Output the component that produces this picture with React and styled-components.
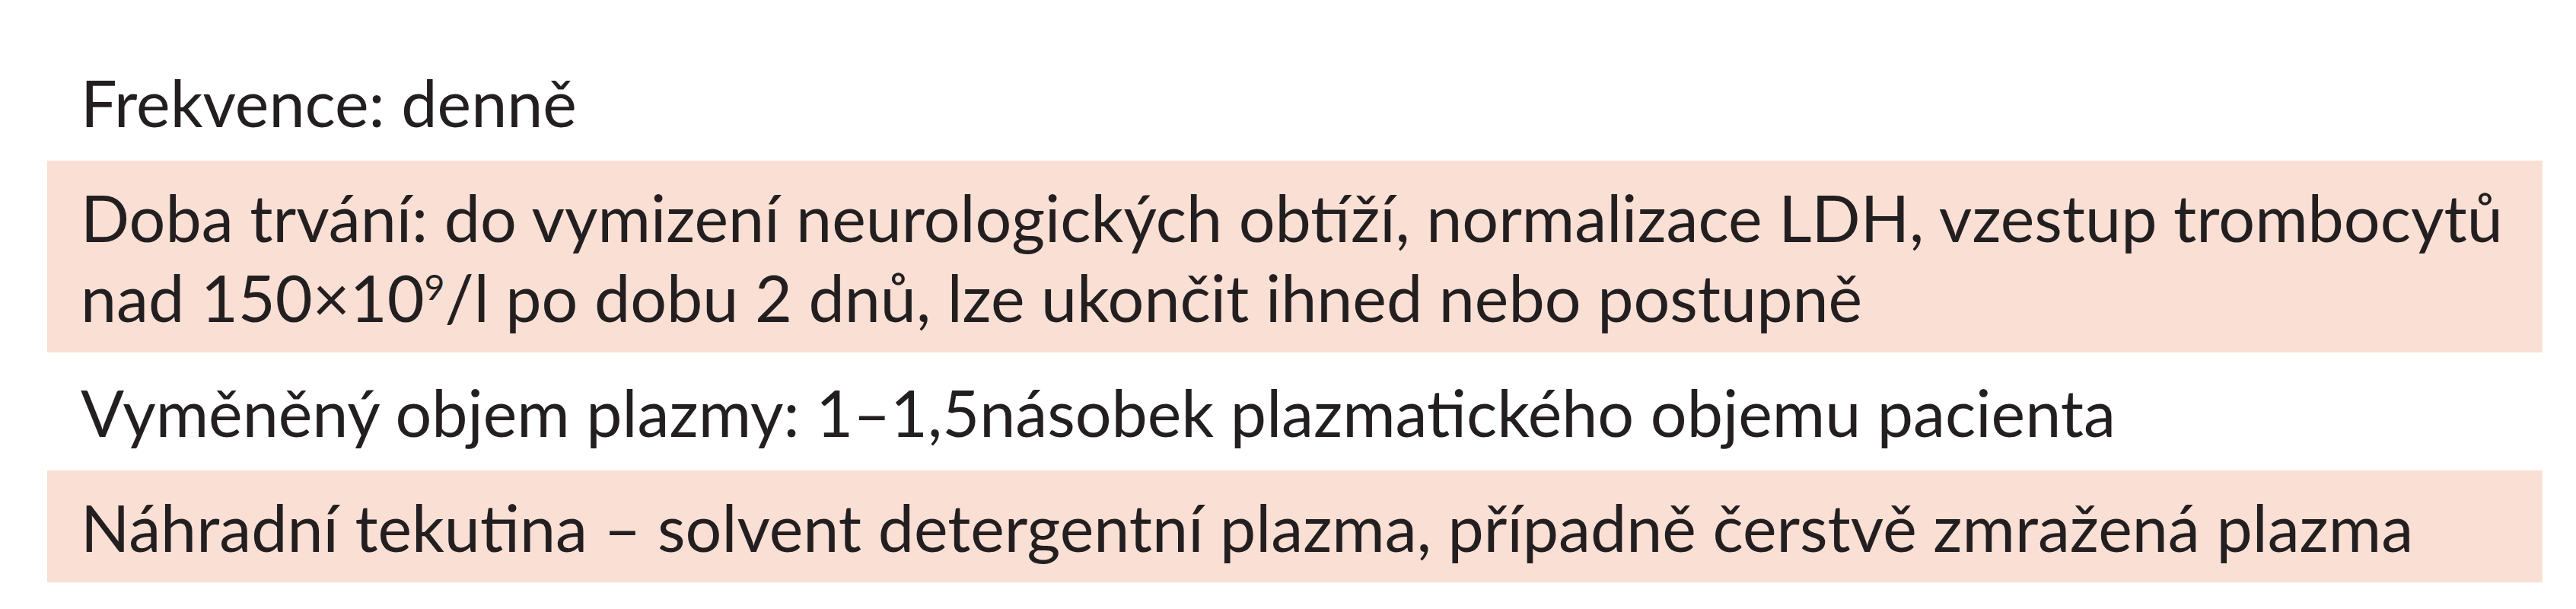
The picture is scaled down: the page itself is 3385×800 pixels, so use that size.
import React from "react";
import styled, { createGlobalStyle } from "styled-components";

const Global = createGlobalStyle`
  body {
    margin: 0;
    background: #ffffff;
  }
`;

const Table = styled.div`
  display: flex;
  flex-direction: column;
  gap: 4px;
  width: 3279px;
  margin: 0 0 0 62px;
  padding-top: 60px;
`;

const Row = styled.div`
  padding: 22px 20px 20px 44px;
  background: ${props => (props.shaded ? "#fadfd4" : "#ffffff")};
  font-family: Lato, "Open Sans", sans-serif;
  font-size: 84.4px;
  line-height: 105px;
  color: #231f20;
  white-space: nowrap;
`;

const rows = [
  { shaded: false, lines: ["Frekvence: denně"] },
  {
    shaded: true,
    lines: [
      "Doba trvání: do vymizení neurologických obtíží, normalizace LDH, vzestup trombocytů",
      <>nad 150×10<sup style={{ fontSize: "0.55em", lineHeight: 0 }}>9</sup>/l po dobu 2 dnů, lze ukončit ihned nebo postupně</>
    ]
  },
  { shaded: false, lines: ["Vyměněný objem plazmy: 1–1,5násobek plazmatického objemu pacienta"] },
  { shaded: true, lines: ["Náhradní tekutina – solvent detergentní plazma, případně čerstvě zmražená plazma"] }
];

export default () => {
  return (
    <>
      <Global />
      <Table>
        {rows.map((row, i) => (
          <Row key={i} shaded={row.shaded}>
            {row.lines.map((line, j) => (
              <div key={j}>{line}</div>
            ))}
          </Row>
        ))}
      </Table>
    </>
  );
};
